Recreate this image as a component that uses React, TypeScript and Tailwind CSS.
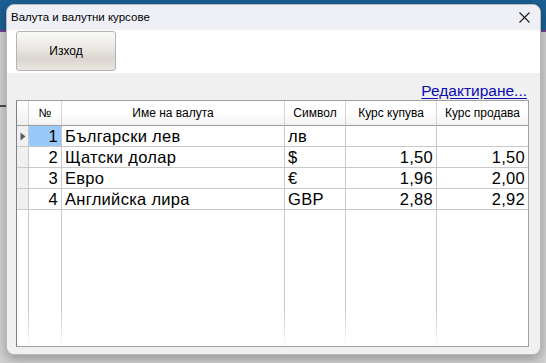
import React from "react";

type Row = { no: number; name: string; symbol: string; buy: string; sell: string };

const rows: Row[] = [
  { no: 1, name: "Български лев", symbol: "лв", buy: "", sell: "" },
  { no: 2, name: "Щатски долар", symbol: "$", buy: "1,50", sell: "1,50" },
  { no: 3, name: "Евро", symbol: "€", buy: "1,96", sell: "2,00" },
  { no: 4, name: "Английска лира", symbol: "GBP", buy: "2,88", sell: "2,92" },
];

const cols = "grid grid-cols-[12px_33px_223px_61px_91px_91px]";
const headCell =
  "flex items-center justify-center border-r border-[#d5d5d5] bg-[linear-gradient(to_bottom,#ffffff,#ffffff_55%,#f1f1f1)] text-[12px] text-black";
const cell =
  "flex items-center border-r border-b border-[#c9c9c9] px-[3px] text-[16.5px] tracking-[0.3px] leading-none text-black";
const fillCell =
  "bg-[linear-gradient(to_bottom,#cacaca,#cacaca_75%,#ffffff)] bg-no-repeat bg-right bg-[length:1px_100%]";

export default function App() {
  return (
    <div className="relative w-[546px] h-[363px] overflow-hidden bg-[#d2d2d2] font-['Liberation_Sans',Arial,sans-serif]">
      <div className="h-[32px] bg-[#1b5f93] border-b-2 border-[#7b3f8f]" />
      <div className="absolute left-0 top-[105px] w-[6px] h-[2px] bg-[#4b4b4b]" />

      <div className="absolute left-[6px] top-[4px] w-[535px] h-[351px] rounded-[8px] overflow-hidden bg-[#f0f0f0] border border-[#b9b9b9] shadow-[0_4px_12px_rgba(0,0,0,0.3)] flex flex-col">
        {/* title bar */}
        <div className="h-[25px] shrink-0 bg-[#eff0f6] flex items-center justify-between pl-[4px] pr-[10px]">
          <span className="text-[11.5px] text-black">Валута и валутни курсове</span>
          <svg width="11" height="11" viewBox="0 0 11 11">
            <path d="M0.5 0.5 L10.5 10.5 M10.5 0.5 L0.5 10.5" stroke="#1b1b1b" strokeWidth="1.1" />
          </svg>
        </div>

        {/* toolbar */}
        <div className="h-[43px] shrink-0 bg-white pl-[9px] pt-[1px]">
          <button className="w-[100px] h-[40px] rounded-[3px] border border-[#b3b3b3] bg-[linear-gradient(to_bottom,#f9f9f8,#ebe9e5_40%,#dad6ce_70%,#e9e7e2)] text-[12px] text-black">
            Изход
          </button>
        </div>

        {/* body */}
        <div className="flex-1 flex flex-col pl-[9px] pr-[11px] pb-[7px]">
          <div className="h-[27px] flex items-end justify-end pb-[2px] pr-[2px]">
            <span className="text-[15.5px] leading-none text-[#0a0ab4] underline underline-offset-[2px]">
              Редактиране...
            </span>
          </div>

          <div className="flex-1 flex flex-col bg-white border border-[#a0a0a0] border-l-[#808080]">
            {/* header */}
            <div className={`${cols} h-[25px] border-b border-[#9f9f9f]`}>
              <div className="border-r border-[#d5d5d5] bg-[linear-gradient(to_bottom,#ffffff,#f0f0f0)]" />
              <div className={headCell}>№</div>
              <div className={headCell}>Име на валута</div>
              <div className={headCell}>Символ</div>
              <div className={headCell}>Курс купува</div>
              <div className={`${headCell} border-r-0`}>Курс продава</div>
            </div>

            {rows.map((r) => (
              <div key={r.no} className={`${cols} h-[21px]`}>
                <div className="flex items-center justify-center border-r border-b border-[#c9c9c9] bg-[#f0f0f0]">
                  {r.no === 1 && (
                    <svg width="6" height="9" viewBox="0 0 6 9">
                      <path d="M0.5 0.5 L5.5 4.5 L0.5 8.5 Z" fill="#5a5a5a" />
                    </svg>
                  )}
                </div>
                <div className={`${cell} justify-end ${r.no === 1 ? "bg-[#99c9fb]" : ""}`}>{r.no}</div>
                <div className={cell}>{r.name}</div>
                <div className={cell}>{r.symbol}</div>
                <div className={`${cell} justify-end`}>{r.buy}</div>
                <div className={`${cell} justify-end border-r-0`}>{r.sell}</div>
              </div>
            ))}

            <div className={`${cols} flex-1`}>
              <div className={fillCell} />
              <div className={fillCell} />
              <div className={fillCell} />
              <div className={fillCell} />
              <div className={fillCell} />
              <div />
            </div>
          </div>
        </div>
      </div>
    </div>
  );
}
